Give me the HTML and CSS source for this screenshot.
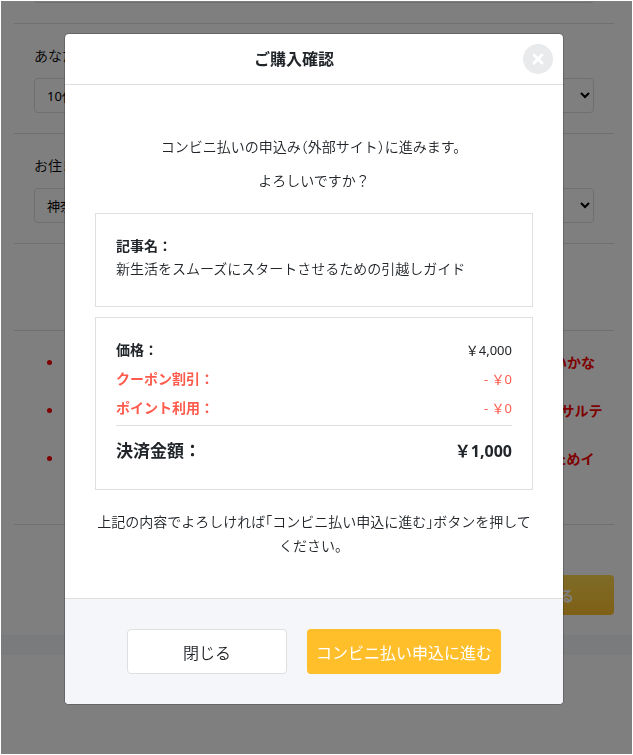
FILE: index.html
```html
<!DOCTYPE html>
<html lang="ja">
<head>
    <meta charset="UTF-8">
    <meta name="viewport" content="width=device-width, initial-scale=1.0">
    <title>ご購入確認</title>
    <link rel="stylesheet" href="styles.css">
</head>
<body>
    <main class="page">
        <form class="form">
            <div class="field field-first">
                <label for="gender">あなたの性別</label>
                <select id="gender">
                    <option>女性</option>
                </select>
            </div>
            <div class="field">
                <label for="age">あなたの年代</label>
                <select id="age">
                    <option>10代</option>
                </select>
            </div>
            <div class="field">
                <label for="area">お住まいの地域</label>
                <select id="area">
                    <option>神奈川県</option>
                </select>
            </div>
            <div class="spacer"></div>
            <ul class="notes">
                <li><a href="#">お申込み後のキャンセル</a>や返金につきましては、お客様のご都合による場合はいかな<br>る理由でもお受けできません。</li>
                <li><a href="#">ご購入いただいた記事</a>の内容に関するご質問1件につき、担当者による個別コンサルテ<br>ィングは対象外となります。</li>
                <li>お支払い後の反映には時間がかかる場合があります。購入状況の正しい確認のためイ<br>ンターネット接続をご確認ください。</li>
            </ul>
            <div class="submit">
                <button type="button" class="btn-submit">購入手続きへ進める</button>
            </div>
        </form>
        <div class="band"></div>
    </main>

    <div class="overlay">
        <div class="modal" role="dialog" aria-labelledby="modal-title">
            <div class="modal-header">
                <h2 id="modal-title">ご購入確認</h2>
                <button type="button" class="btn-x" aria-label="閉じる">
                    <svg width="14" height="14" viewBox="0 0 14 14">
                        <path d="M3 3L11 11M11 3L3 11" stroke="#fff" stroke-width="3" stroke-linecap="round"/>
                    </svg>
                </button>
            </div>
            <div class="modal-body">
                <p>コンビニ払いの申込み<span class="half">（</span>外部サイト<span class="half">）</span>に進みます。</p>
                <p>よろしいですか？</p>
                <div class="box article">
                    <strong>記事名：</strong>
                    <div>新生活をスムーズにスタートさせるための引越しガイド</div>
                </div>
                <dl class="box prices">
                    <div class="row">
                        <dt>価格：</dt>
                        <dd>￥4,000</dd>
                    </div>
                    <div class="row minus">
                        <dt>クーポン割引：</dt>
                        <dd>- ￥0</dd>
                    </div>
                    <div class="row minus">
                        <dt>ポイント利用：</dt>
                        <dd>- ￥0</dd>
                    </div>
                    <div class="row total">
                        <dt>決済金額：</dt>
                        <dd>￥1,000</dd>
                    </div>
                </dl>
                <p class="guide">上記の内容でよろしければ<span class="half">「</span>コンビニ払い申込に進む<span class="half">」</span>ボタンを押してください。</p>
            </div>
            <div class="modal-footer">
                <button type="button" class="btn btn-close">閉じる</button>
                <button type="button" class="btn btn-go">コンビニ払い申込に進む</button>
            </div>
        </div>
    </div>
</body>
</html>
```
FILE: styles.css
```css
* {
    box-sizing: border-box;
}
body {
    margin: 0;
    padding: 1px;
    height: 100vh;
    overflow: hidden;
    font-family: "Noto Sans", "Noto Sans CJK JP", sans-serif;
    font-size: 14px;
    font-weight: 350;
    line-height: 24px;
    color: #212529;
    background-color: #fff;
}
button,
select {
    font-family: inherit;
    font-weight: inherit;
    color: inherit;
}
button {
    cursor: pointer;
}
strong {
    font-weight: bold;
}

/* page behind the modal */
.page {
    height: 100%;
    overflow: hidden;
}
.form {
    max-width: 626px;
    padding: 0 13px 20px;
    color: #000;
}
.field {
    display: flex;
    flex-direction: column;
    gap: 10px;
    padding: 20px;
    border-bottom: 1px solid #dfdfdf;
}
.field-first {
    margin-top: -87px;
}
.field select {
    height: 35px;
    padding: 0 8px;
    font-size: 13px;
    font-weight: normal;
    border: 1px solid #dfdfdf;
    border-radius: 4px;
    background-color: #fff;
}
.spacer {
    height: 87px;
    border-bottom: 1px solid #dfdfdf;
}
.notes {
    margin: 0;
    padding: 20px 0 29px 50px;
    border-bottom: 1px solid #dfdfdf;
    color: #f00;
    font-weight: bold;
    white-space: nowrap;
}
.notes a {
    color: #ff9800;
    text-decoration: none;
}
.submit {
    display: flex;
    justify-content: flex-end;
    padding-top: 50px;
}
.btn-submit {
    height: 40px;
    padding: 0 40px;
    font-size: 14px;
    font-weight: bold;
    color: #fff;
    border: none;
    border-radius: 4px;
    background: linear-gradient(#ffd84f, #ffbf2b);
}
.band {
    height: 20px;
    background: #f4f6fa;
}

/* modal */
.overlay {
    position: fixed;
    inset: 1px;
    padding: 32px 5px 0 0;
    background-color: rgba(0, 0, 0, 0.5);
}
.modal {
    max-width: 500px;
    margin: 0 auto;
    background-color: #fff;
    background-clip: padding-box;
    border: 1px solid rgba(0, 0, 0, 0.2);
    border-radius: 5px;
    overflow: hidden;
}
.modal-header {
    display: flex;
    align-items: center;
    height: 51px;
    padding: 0 10px 0 0;
    border-bottom: 1px solid #dfdfdf;
}
.modal-header h2 {
    flex: 1;
    margin: 0;
    font-size: 16px;
    text-align: center;
}
.btn-x {
    display: flex;
    align-items: center;
    justify-content: center;
    width: 30px;
    height: 30px;
    padding: 0;
    border: none;
    border-radius: 50%;
    background-color: #e9eaec;
}
.modal-body {
    padding: 50px 30px 40px;
    text-align: center;
}
.modal-body p {
    margin: 0 0 10px;
}
.half {
    font-feature-settings: "halt";
}
.box {
    margin: 0;
    padding: 20px 20px 26px;
    border: 1px solid #dfdfdf;
    text-align: left;
}
.article {
    margin: 20px 0 10px;
    line-height: 23px;
}
.row {
    display: flex;
    justify-content: space-between;
    margin-bottom: 5px;
}
.row dt {
    font-weight: bold;
}
.row dd {
    margin: 0;
    font-size: 13px;
    font-weight: normal;
}
.minus {
    color: #ff5b4d;
}
.total {
    margin: 0;
    padding-top: 13px;
    border-top: 1px solid #dfdfdf;
}
.total dt {
    font-size: 17px;
}
.total dd {
    font-size: 16px;
    font-weight: bold;
}
.modal-body .guide {
    margin: 20px 0 0;
}
.modal-footer {
    display: flex;
    justify-content: center;
    gap: 20px;
    padding: 30px 20px;
    border-top: 1px solid #dfdfdf;
    background-color: #f4f6fa;
}
.btn {
    height: 45px;
    padding: 0 9px;
    font-size: 16px;
    border: none;
    border-radius: 4px;
}
.btn-close {
    width: 160px;
    border: 1px solid #dfdfdf;
    background-color: #fff;
}
.btn-go {
    color: #fff;
    font-weight: normal;
    background-color: #ffbf2b;
}
```
